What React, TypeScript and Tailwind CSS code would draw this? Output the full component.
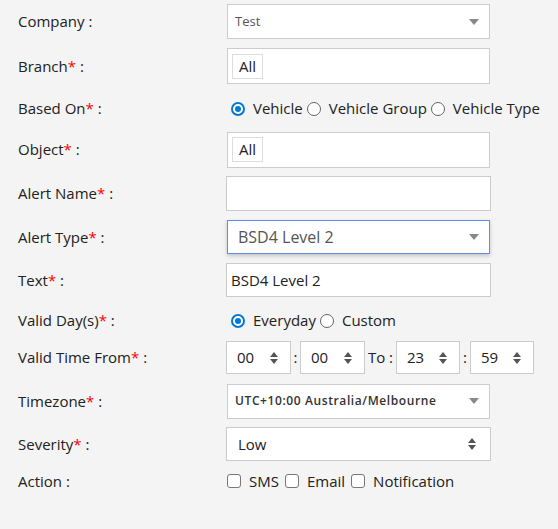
import React from "react";

const font = { fontFamily: '"Open Sans", "Noto Sans", sans-serif' };

function Label({ text, req }: { text: string; req?: boolean }) {
  return (
    <div className="w-[227px] shrink-0 pl-[18px] text-[15px] text-[#222]">
      {text}
      {req && <span className="text-[#ff0000]">*</span>} :
    </div>
  );
}

function Row({ h, children }: { h: string; children: React.ReactNode }) {
  return <div className={`flex items-center ${h}`}>{children}</div>;
}

function Caret() {
  return (
    <svg width="10" height="6" viewBox="0 0 10 6" className="absolute right-[10px] top-1/2 -translate-y-1/2">
      <path d="M0 0h10L5 6z" fill="#888" />
    </svg>
  );
}

function Spin() {
  return (
    <svg width="8" height="14" viewBox="0 0 8 14" className="absolute right-[12px] top-1/2 -translate-y-1/2">
      <path d="M0 6L4 1l4 5z" fill="#555" />
      <path d="M0 8l4 5 4-5z" fill="#555" />
    </svg>
  );
}

function Radio({ on, label }: { on?: boolean; label: string }) {
  return (
    <span className="flex items-center gap-[8px]">
      {on ? (
        <span className="w-[14px] h-[14px] rounded-full border-[2px] border-[#0078d7] flex items-center justify-center bg-white">
          <span className="w-[6px] h-[6px] rounded-full bg-[#0078d7]" />
        </span>
      ) : (
        <span className="w-[14px] h-[14px] rounded-full border border-[#666] bg-white" />
      )}
      <span className="text-[15px] text-[#222]">{label}</span>
    </span>
  );
}

function Check({ label }: { label: string }) {
  return (
    <span className="flex items-center gap-[8px]">
      <span className="w-[14px] h-[14px] rounded-[3px] border border-[#777] bg-white" />
      <span className="text-[15px] text-[#222]">{label}</span>
    </span>
  );
}

function TimeBox({ v, w }: { v: string; w: string }) {
  return (
    <div className={`relative ${w} h-[33px] bg-white border border-[#ccc] flex items-center pl-[10px] text-[15px] text-[#222]`}>
      {v}
      <Spin />
    </div>
  );
}

export default function App() {
  return (
    <div className="w-[558px] h-[529px] bg-[#f4f4f4]" style={font}>
      <Row h="h-[43px]">
        <Label text="Company" />
        <div className="relative w-[263px] h-[35px] bg-white border border-[#ccc] flex items-center pl-[7px] text-[13px] text-[#555]">
          Test
          <Caret />
        </div>
      </Row>
      <Row h="h-[46px]">
        <Label text="Branch" req />
        <div className="w-[263px] h-[36px] bg-white border border-[#ccc] flex items-center pl-[4px]">
          <span className="h-[25px] px-[6px] border border-[#ddd] flex items-center text-[15px] text-[#222]">All</span>
        </div>
      </Row>
      <Row h="h-[39px]">
        <Label text="Based On" req />
        <div className="flex items-center gap-[4px] pl-[4px]">
          <Radio on label="Vehicle" />
          <Radio label="Vehicle Group" />
          <Radio label="Vehicle Type" />
        </div>
      </Row>
      <Row h="h-[43px]">
        <Label text="Object" req />
        <div className="w-[263px] h-[36px] bg-white border border-[#ccc] flex items-center pl-[4px]">
          <span className="h-[25px] px-[6px] border border-[#ddd] flex items-center text-[15px] text-[#222]">All</span>
        </div>
      </Row>
      <Row h="h-[45px]">
        <Label text="Alert Name" req />
        <div className="-ml-[1px] w-[265px] h-[35px] bg-white border border-[#ccc]" />
      </Row>
      <Row h="h-[42px]">
        <Label text="Alert Type" req />
        <div className="relative w-[263px] h-[34px] bg-white border border-[#5b8ee6] shadow-[0_2px_4px_rgba(0,0,0,0.2)] flex items-center pl-[10px] text-[16px] text-[#555]">
          BSD4 Level 2
          <Caret />
        </div>
      </Row>
      <Row h="h-[44px]">
        <Label text="Text" req />
        <div className="-ml-[1px] w-[265px] h-[34px] bg-white border border-[#ccc] flex items-center pl-[4px] text-[15px] text-[#222]">
          BSD4 Level 2
        </div>
      </Row>
      <Row h="h-[37px]">
        <Label text="Valid Day(s)" req />
        <div className="flex items-center gap-[4px] pl-[4px]">
          <Radio on label="Everyday" />
          <Radio label="Custom" />
        </div>
      </Row>
      <Row h="h-[37px]">
        <Label text="Valid Time From" req />
        <div className="-ml-[1px] flex items-center text-[15px] text-[#222]">
          <TimeBox v="00" w="w-[65px]" />
          <span className="w-[9px] text-center">:</span>
          <TimeBox v="00" w="w-[65px]" />
          <span className="w-[31px] text-center">To :</span>
          <TimeBox v="23" w="w-[64px]" />
          <span className="w-[10px] text-center">:</span>
          <TimeBox v="59" w="w-[64px]" />
        </div>
      </Row>
      <Row h="h-[50px]">
        <Label text="Timezone" req />
        <div className="relative w-[263px] h-[35px] bg-white border border-[#ccc] flex items-center pl-[7px] text-[12px] font-semibold tracking-[0.6px] text-[#333]">
          UTC+10:00 Australia/Melbourne
          <Caret />
        </div>
      </Row>
      <Row h="h-[36px]">
        <Label text="Severity" req />
        <div className="-ml-[1px] relative w-[265px] h-[34px] bg-white border border-[#ccc] flex items-center pl-[11px] text-[15px] text-[#222]">
          Low
          <svg width="8" height="14" viewBox="0 0 8 14" className="absolute right-[14px] top-1/2 -translate-y-1/2">
            <path d="M0 6L4 1l4 5z" fill="#555" />
            <path d="M0 8l4 5 4-5z" fill="#555" />
          </svg>
        </div>
      </Row>
      <Row h="h-[38px]">
        <Label text="Action" />
        <div className="flex items-center gap-[6px]">
          <Check label="SMS" />
          <Check label="Email" />
          <Check label="Notification" />
        </div>
      </Row>
    </div>
  );
}
